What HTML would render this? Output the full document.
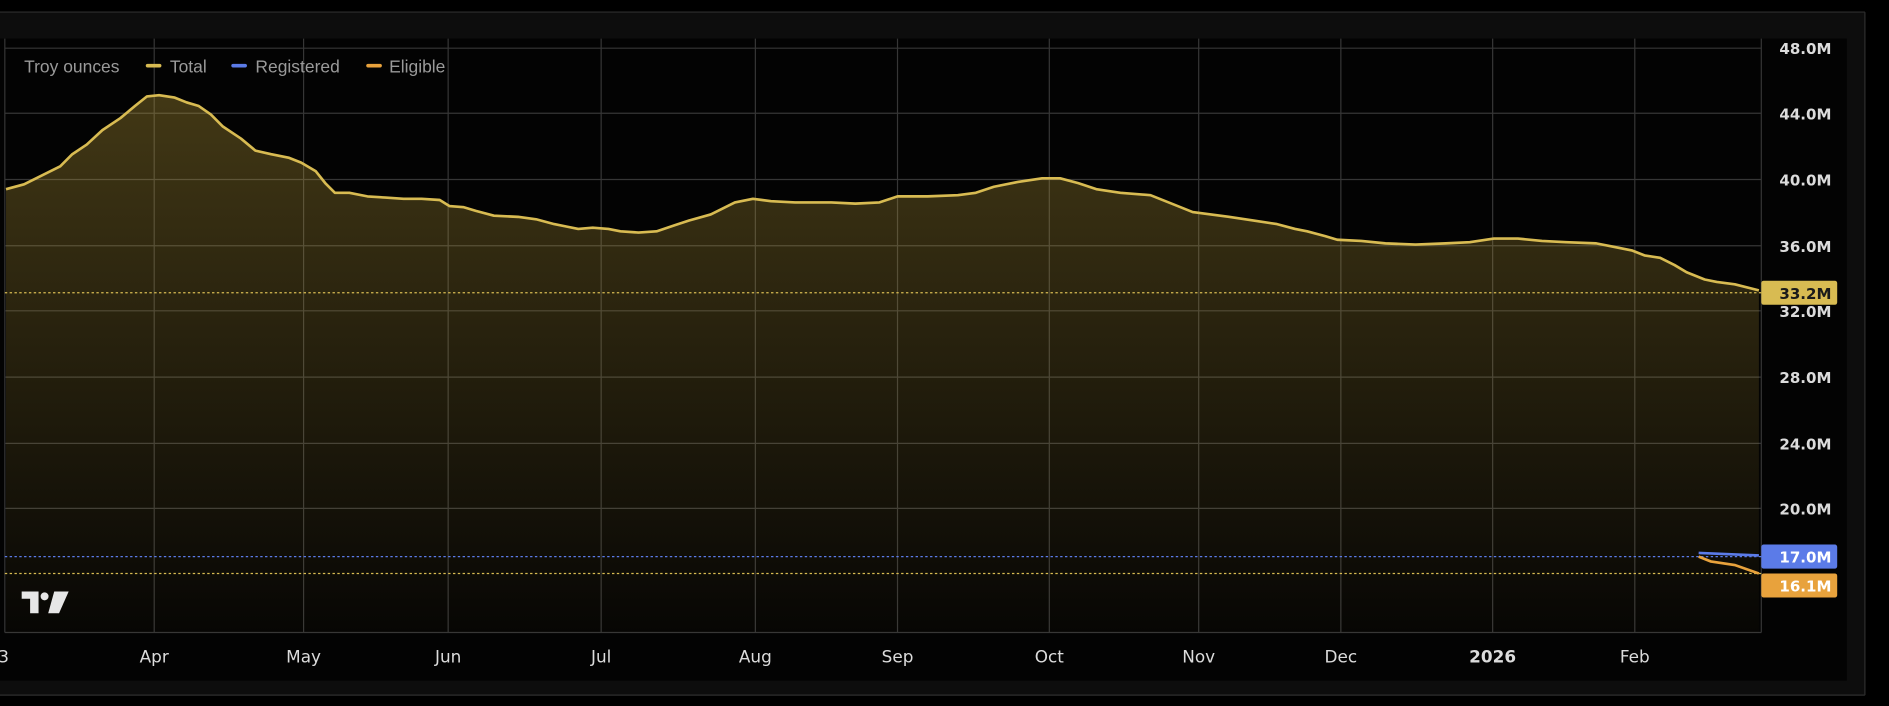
<!DOCTYPE html>
<html><head><meta charset="utf-8"><style>html,body{margin:0;padding:0;background:#000;overflow:hidden}svg{display:block}</style></head>
<body>
<svg width="1889" height="706" viewBox="0 0 1568 586" xmlns="http://www.w3.org/2000/svg" font-family="Liberation Sans, DejaVu Sans, sans-serif">
<defs>
<linearGradient id="g" x1="0" y1="0" x2="0" y2="1">
<stop offset="0" stop-color="#c8a83c" stop-opacity="0.32"/>
<stop offset="1" stop-color="#c8a83c" stop-opacity="0.02"/>
</linearGradient>
</defs>
<rect x="0" y="0" width="1568" height="586" fill="#000"/>
<rect x="0" y="10" width="1548" height="567" fill="#0d0d0d"/>
<line x1="0" y1="10" x2="1548" y2="10" stroke="#2e2e2e"/>
<line x1="0" y1="577" x2="1548" y2="577" stroke="#2e2e2e"/>
<line x1="1548" y1="10" x2="1548" y2="577" stroke="#2e2e2e"/>
<rect x="0" y="32" width="1533" height="533" fill="#030303"/>
<g stroke="#363636" stroke-width="1">
<line x1="4" y1="40" x2="1462" y2="40"/><line x1="4" y1="94" x2="1462" y2="94"/><line x1="4" y1="149" x2="1462" y2="149"/><line x1="4" y1="204" x2="1462" y2="204"/><line x1="4" y1="258" x2="1462" y2="258"/><line x1="4" y1="313" x2="1462" y2="313"/><line x1="4" y1="368" x2="1462" y2="368"/><line x1="4" y1="422" x2="1462" y2="422"/><line x1="4" y1="525" x2="1462" y2="525"/>
<line x1="4" y1="32" x2="4" y2="525"/><line x1="128" y1="32" x2="128" y2="525"/><line x1="252" y1="32" x2="252" y2="525"/><line x1="372" y1="32" x2="372" y2="525"/><line x1="499" y1="32" x2="499" y2="525"/><line x1="627" y1="32" x2="627" y2="525"/><line x1="745" y1="32" x2="745" y2="525"/><line x1="871" y1="32" x2="871" y2="525"/><line x1="995" y1="32" x2="995" y2="525"/><line x1="1113" y1="32" x2="1113" y2="525"/><line x1="1239" y1="32" x2="1239" y2="525"/><line x1="1357" y1="32" x2="1357" y2="525"/><line x1="1462" y1="32" x2="1462" y2="525"/>
</g>
<path d="M5,157 L20,153 L30,148 L40,143 L50,138 L60,128 L72,120 L85,108 L100,98 L112,88 L122,80 L132,79 L145,81 L155,85 L165,88 L175,95 L185,105 L200,115 L212,125 L225,128 L240,131 L250,135 L262,142 L270,152 L278,160 L290,160 L305,163 L320,164 L335,165 L350,165 L365,166 L373,171 L385,172 L395,175 L410,179 L430,180 L445,182 L460,186 L470,188 L480,190 L492,189 L505,190 L515,192 L530,193 L545,192 L560,187 L572,183 L590,178 L610,168 L625,165 L640,167 L660,168 L690,168 L710,169 L730,168 L745,163 L770,163 L795,162 L810,160 L825,155 L845,151 L865,148 L880,148 L895,152 L910,157 L930,160 L955,162 L975,170 L990,176 L1005,178 L1020,180 L1040,183 L1060,186 L1075,190 L1085,192 L1100,196 L1110,199 L1130,200 L1150,202 L1175,203 L1200,202 L1220,201 L1240,198 L1260,198 L1280,200 L1300,201 L1325,202 L1340,205 L1355,208 L1365,212 L1378,214 L1390,220 L1400,226 L1415,232 L1425,234 L1440,236 L1460,241 L1460,525 L5,525 Z" fill="url(#g)"/>
<path d="M5,157 L20,153 L30,148 L40,143 L50,138 L60,128 L72,120 L85,108 L100,98 L112,88 L122,80 L132,79 L145,81 L155,85 L165,88 L175,95 L185,105 L200,115 L212,125 L225,128 L240,131 L250,135 L262,142 L270,152 L278,160 L290,160 L305,163 L320,164 L335,165 L350,165 L365,166 L373,171 L385,172 L395,175 L410,179 L430,180 L445,182 L460,186 L470,188 L480,190 L492,189 L505,190 L515,192 L530,193 L545,192 L560,187 L572,183 L590,178 L610,168 L625,165 L640,167 L660,168 L690,168 L710,169 L730,168 L745,163 L770,163 L795,162 L810,160 L825,155 L845,151 L865,148 L880,148 L895,152 L910,157 L930,160 L955,162 L975,170 L990,176 L1005,178 L1020,180 L1040,183 L1060,186 L1075,190 L1085,192 L1100,196 L1110,199 L1130,200 L1150,202 L1175,203 L1200,202 L1220,201 L1240,198 L1260,198 L1280,200 L1300,201 L1325,202 L1340,205 L1355,208 L1365,212 L1378,214 L1390,220 L1400,226 L1415,232 L1425,234 L1440,236 L1460,241" fill="none" stroke="#d8bb52" stroke-width="2.2" stroke-linejoin="round"/>
<g stroke-width="1" stroke-dasharray="2,2">
<line x1="4" y1="243" x2="1462" y2="243" stroke="#d8bb52"/>
<line x1="4" y1="462" x2="1462" y2="462" stroke="#5b7be8"/>
<line x1="4" y1="476" x2="1462" y2="476" stroke="#d8bb52"/>
</g>
<path d="M1410,459 L1460,461" stroke="#5b7be8" stroke-width="2.2" fill="none"/>
<path d="M1410,462 L1420,466 L1440,469 L1460,476" stroke="#e8a23c" stroke-width="2.2" fill="none"/>
<g font-size="14.5" fill="#9a9a9a">
<text x="20" y="60">Troy ounces</text>
<rect x="121" y="53" width="13" height="3" rx="1.5" fill="#d8bb52"/><text x="141" y="60">Total</text>
<rect x="192" y="53" width="13" height="3" rx="1.5" fill="#5b7be8"/><text x="212" y="60">Registered</text>
<rect x="304" y="53" width="13" height="3" rx="1.5" fill="#e8a23c"/><text x="323" y="60">Eligible</text>
</g>
<g font-size="12.5" fill="#dcdcdc" font-family="DejaVu Sans, sans-serif" font-weight="bold">
<text x="1477" y="45">48.0M</text><text x="1477" y="99">44.0M</text><text x="1477" y="154">40.0M</text><text x="1477" y="209">36.0M</text><text x="1477" y="263">32.0M</text><text x="1477" y="318">28.0M</text><text x="1477" y="373">24.0M</text><text x="1477" y="427">20.0M</text>
</g>
<g font-size="12.5" font-family="DejaVu Sans, sans-serif" font-weight="bold">
<rect x="1462" y="233" width="63" height="20" rx="2" fill="#d8bb52"/>
<text x="1477" y="248" fill="#1a1a1a">33.2M</text>
<rect x="1462" y="452" width="63" height="20" rx="2" fill="#5b7be8"/>
<text x="1477" y="467" fill="#fff">17.0M</text>
<rect x="1462" y="476" width="63" height="20" rx="2" fill="#e8a23c"/>
<text x="1477" y="491" fill="#fff">16.1M</text>
</g>
<g font-size="14" fill="#dcdcdc" text-anchor="middle" font-family="DejaVu Sans, sans-serif">
<text x="3" y="550">3</text><text x="128" y="550">Apr</text><text x="252" y="550">May</text><text x="372" y="550">Jun</text><text x="499" y="550">Jul</text><text x="627" y="550">Aug</text><text x="745" y="550">Sep</text><text x="871" y="550">Oct</text><text x="995" y="550">Nov</text><text x="1113" y="550">Dec</text><text x="1239" y="550" font-weight="bold">2026</text><text x="1357" y="550">Feb</text>
</g>
<g fill="#e6e6e6">
<path d="M18,491 H32 V509 H25 V497 H18 Z"/>
<circle cx="37" cy="495" r="3.3"/>
<path d="M45,491 H57 L49,509 H40 Z"/>
</g>
</svg>
</body></html>
